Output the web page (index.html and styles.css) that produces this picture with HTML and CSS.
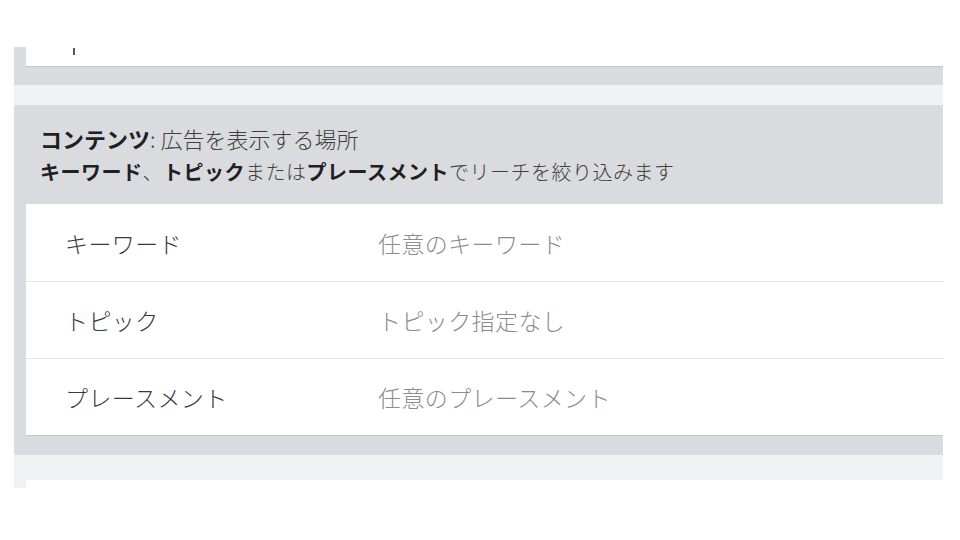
FILE: index.html
```html
<!DOCTYPE html>
<html lang="ja">
<head>
<meta charset="utf-8">
<link rel="stylesheet" href="styles.css">
</head>
<body>
<div class="page">
  <section class="panel panel-top">
    <div class="card card-stub"><span class="tick"></span></div>
  </section>
  <div class="gap"></div>
  <section class="panel panel-main">
    <header class="head">
      <p class="head-title"><b>コンテンツ</b>: 広告を表示する場所</p>
      <p class="head-sub"><b>キーワード</b>、<b>トピック</b>または<b>プレースメント</b>でリーチを絞り込みます</p>
    </header>
    <div class="card list">
      <div class="row"><span class="label">キーワード</span><span class="value">任意のキーワード</span></div>
      <div class="row"><span class="label">トピック</span><span class="value">トピック指定なし</span></div>
      <div class="row"><span class="label">プレースメント</span><span class="value">任意のプレースメント</span></div>
    </div>
  </section>
  <div class="gap gap-low"></div>
  <section class="panel panel-next">
    <div class="card card-next"></div>
  </section>
</div>
</body>
</html>
```

FILE: styles.css
```css
* { box-sizing: border-box; }
html, body {
  margin: 0;
  padding: 0;
  background: #ffffff;
}
body {
  font-family: "Noto Sans CJK JP", "Noto Sans", sans-serif;
  color: #333;
}
.page {
  padding-top: 47px;
  margin-left: 14px;
  width: 929px;
}
.panel {
  background: #dadbde;
  padding-left: 12px;
}
.card {
  background: #fff;
}
.panel-top {
  padding-bottom: 18px;
}
.card-stub {
  height: 20px;
  border-bottom: 1px solid #c4c5c8;
  position: relative;
}
.tick {
  position: absolute;
  left: 47px;
  top: 1px;
  width: 2px;
  height: 7px;
  background: #5a5a5a;
}
.gap {
  height: 20px;
  background: #f1f2f4;
}
.gap-low {
  height: 25px;
}
.panel-main {
  padding-bottom: 19px;
}
.head {
  padding: 17px 0 16px 14px;
}
.head p {
  margin: 0;
  line-height: 33px;
}
.head-title {
  font-size: 22px;
  color: #3d3f42;
  font-weight: 300;
}
.head-sub {
  font-size: 20px;
  letter-spacing: 0.5px;
  color: #3d3f42;
  font-weight: 300;
}
.head b {
  font-weight: 700;
  color: #1f2023;
}
.list {
  border-bottom: 1px solid #c6c7ca;
}
.row {
  display: flex;
  align-items: center;
  height: 77px;
  padding-left: 39px;
  font-size: 23px;
  letter-spacing: 0.4px;
  font-weight: 300;
}
.row + .row {
  border-top: 1px solid #e4e5e7;
}
.label {
  width: 313px;
  color: #3a3a3a;
}
.value {
  color: #8c8c8c;
}
.panel-next {
  background: #f1f2f4;
  height: 8px;
}
.card-next {
  height: 8px;
  margin-top: 0;
}
```
